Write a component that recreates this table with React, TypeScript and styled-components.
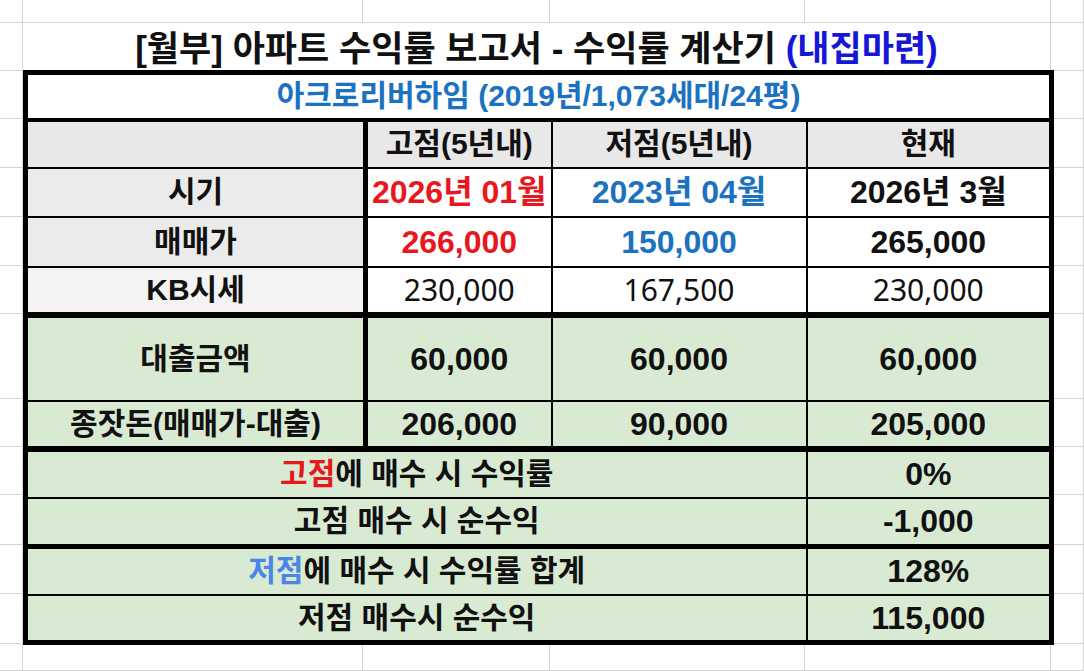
import styled, { createGlobalStyle } from "styled-components";

const GlobalStyle = createGlobalStyle`
  html, body {
    margin: 0;
    padding: 0;
    background: #ffffff;
  }
  body {
    overflow: hidden;
    font-family: "Liberation Sans", "Noto Sans CJK KR", sans-serif;
    color: #111;
  }
`;

const RED = "#e8171e";
const BLUE = "#1b72c0";
const LIGHT_BLUE = "#4a86e8";
const TITLE_BLUE = "#1616d6";

type Tone = "head" | "label" | "soft" | "white" | "green";

const tones: Record<Tone, string> = {
  head: "#e8e8e8",
  label: "#ebebeb",
  soft: "#f3f3f3",
  white: "#ffffff",
  green: "#d9ead3",
};

const Sheet = styled.div`
  display: grid;
  grid-template-columns: 23px 340px 187px 255px 246px 1fr;
  grid-template-rows: 23px 48px 48px 49px 49px 49px 48px 85px 48px 48px 50px 49px 50px 1fr;
  width: 100vw;
  height: 100vh;
`;

const GridCell = styled.div<{ $row: number; $col: number }>`
  grid-row: ${(p) => p.$row};
  grid-column: ${(p) => p.$col};
  border-right: 1px solid #d4d4d4;
  border-bottom: 1px solid #d4d4d4;
`;

const Title = styled.h1`
  grid-row: 2;
  grid-column: 2 / 6;
  margin: 0;
  padding-bottom: 3px;
  display: flex;
  align-items: center;
  justify-content: center;
  border-right: 1px solid #d4d4d4;
  font-size: 35px;
  font-weight: 700;
  color: #111;
  white-space: nowrap;
`;

const Tint = styled.span<{ $color: string }>`
  color: ${(p) => p.$color};
`;

const Report = styled.table`
  grid-row: 3 / 14;
  grid-column: 2 / 6;
  align-self: start;
  justify-self: start;
  margin: -1px 0 0 0;
  width: 1026px;
  border-collapse: collapse;
  table-layout: fixed;
  border: 5px solid #000;
`;

const Row = styled.tr<{ $h: number; $line?: number }>`
  height: ${(p) => p.$h}px;
  border-bottom: ${(p) => p.$line ?? 2}px solid #000;
`;

const Cell = styled.td<{
  $tone?: Tone;
  $color?: string;
  $size?: number;
  $regular?: boolean;
  $divider?: boolean;
}>`
  padding: 0;
  border: 2px solid #000;
  ${(p) => (p.$divider ? "border-right: 5px solid #000;" : "")}
  background: ${(p) => tones[p.$tone ?? "white"]};
  color: ${(p) => p.$color ?? "#111"};
  font-size: ${(p) => p.$size ?? 32}px;
  font-weight: ${(p) => (p.$regular ? 400 : 700)};
  font-family: ${(p) =>
    p.$regular
      ? `"Noto Sans", "Noto Sans CJK KR", sans-serif`
      : `"Liberation Sans", "Noto Sans CJK KR", sans-serif`};
  text-align: center;
  vertical-align: middle;
  white-space: nowrap;
  line-height: 1;
`;

const margins = [
  [1, 1], [1, 2], [1, 3], [1, 4], [1, 5], [1, 6],
  [2, 1], [2, 6],
  ...Array.from({ length: 11 }, (_, i) => [i + 3, 1]),
  ...Array.from({ length: 11 }, (_, i) => [i + 3, 6]),
  [14, 1], [14, 2], [14, 3], [14, 4], [14, 5], [14, 6],
];

const upper = [
  {
    label: "시기",
    h: 49,
    values: [
      { text: "2026년 01월", color: RED },
      { text: "2023년 04월", color: BLUE },
      { text: "2026년 3월" },
    ],
  },
  {
    label: "매매가",
    h: 50,
    values: [
      { text: "266,000", color: RED },
      { text: "150,000", color: BLUE },
      { text: "265,000" },
    ],
  },
];

const App = () => {
  return (
    <>
      <GlobalStyle />
      <Sheet>
        {margins.map(([r, c]) => (
          <GridCell key={`${r}-${c}`} $row={r} $col={c} />
        ))}
        <Title>
          [월부] 아파트 수익률 보고서 - 수익률 계산기&nbsp;
          <Tint $color={TITLE_BLUE}>(내집마련)</Tint>
        </Title>
        <Report>
          <colgroup>
            <col style={{ width: 340 }} />
            <col style={{ width: 186 }} />
            <col style={{ width: 255 }} />
            <col style={{ width: 245 }} />
          </colgroup>
          <tbody>
            <Row $h={47} $line={4}>
              <Cell colSpan={4} $color={BLUE} $size={30}>
                아크로리버하임 (2019년/1,073세대/24평)
              </Cell>
            </Row>
            <Row $h={48}>
              <Cell $tone="head" $divider />
              <Cell $tone="head" $size={30}>고점(5년내)</Cell>
              <Cell $tone="head" $size={30}>저점(5년내)</Cell>
              <Cell $tone="head" $size={30}>현재</Cell>
            </Row>
            {upper.map((row) => (
              <Row key={row.label} $h={row.h}>
                <Cell $tone="label" $size={30} $divider>
                  {row.label}
                </Cell>
                {row.values.map((v) => (
                  <Cell key={v.text} $color={v.color}>
                    {v.text}
                  </Cell>
                ))}
              </Row>
            ))}
            <Row $h={48} $line={6}>
              <Cell $tone="soft" $size={30} $divider>
                KB시세
              </Cell>
              <Cell $regular $size={30}>230,000</Cell>
              <Cell $regular $size={30}>167,500</Cell>
              <Cell $regular $size={30}>230,000</Cell>
            </Row>
            <Row $h={86}>
              <Cell $tone="green" $size={30} $divider>
                대출금액
              </Cell>
              <Cell $tone="green">60,000</Cell>
              <Cell $tone="green">60,000</Cell>
              <Cell $tone="green">60,000</Cell>
            </Row>
            <Row $h={48} $line={6}>
              <Cell $tone="green" $size={30} $divider>
                종잣돈(매매가-대출)
              </Cell>
              <Cell $tone="green">206,000</Cell>
              <Cell $tone="green">90,000</Cell>
              <Cell $tone="green">205,000</Cell>
            </Row>
            <Row $h={49}>
              <Cell colSpan={3} $tone="green" $size={30}>
                <Tint $color={RED}>고점</Tint>에 매수 시 수익률
              </Cell>
              <Cell $tone="green">0%</Cell>
            </Row>
            <Row $h={49} $line={5}>
              <Cell colSpan={3} $tone="green" $size={30}>
                고점 매수 시 순수익
              </Cell>
              <Cell $tone="green">-1,000</Cell>
            </Row>
            <Row $h={48}>
              <Cell colSpan={3} $tone="green" $size={30}>
                <Tint $color={LIGHT_BLUE}>저점</Tint>에 매수 시 수익률 합계
              </Cell>
              <Cell $tone="green">128%</Cell>
            </Row>
            <Row $h={48}>
              <Cell colSpan={3} $tone="green" $size={30}>
                저점 매수시 순수익
              </Cell>
              <Cell $tone="green">115,000</Cell>
            </Row>
          </tbody>
        </Report>
      </Sheet>
    </>
  );
};

export default App;
